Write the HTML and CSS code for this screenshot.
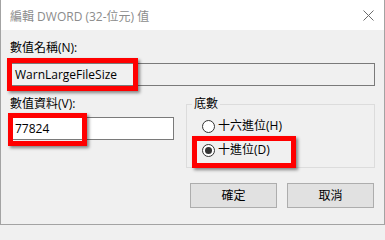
FILE: index.html
```html
<!DOCTYPE html>
<html>
<head>
<meta charset="utf-8">
<link rel="stylesheet" href="styles.css">
</head>
<body>
<div class="window">
  <div class="titlebar">
    <span class="title">編輯 DWORD (32-位元) 值</span>
    <svg class="close" width="11" height="11" viewBox="0 0 11 11"><path d="M0.5 0.5 L10.5 10.5 M10.5 0.5 L0.5 10.5" stroke="#6b6b6b" stroke-width="1" fill="none"/></svg>
  </div>
  <div class="content">
    <div class="label first">數值名稱(N):</div>
    <div class="textbox readonly">WarnLargeFileSize</div>
    <div class="lower">
      <div class="datacol">
        <div class="label">數值資料(V):</div>
        <div class="textbox data">77824</div>
      </div>
      <fieldset class="group">
        <legend>底數</legend>
        <div class="radio"><span class="dot"></span><span>十六進位(H)</span></div>
        <div class="radio"><span class="dot checked"></span><span>十進位(D)</span></div>
      </fieldset>
    </div>
    <div class="buttons">
      <div class="btn">確定</div>
      <div class="btn">取消</div>
    </div>
  </div>
  <div class="mark mark-name"></div>
  <div class="mark mark-data"></div>
  <div class="mark mark-radio"></div>
</div>
</body>
</html>
```
FILE: styles.css
```css
html, body {
  margin: 0;
  padding: 0;
  background: #f0f0f0;
}
body {
  font-family: "Open Sans", "Noto Sans CJK TC", sans-serif;
  font-size: 12px;
  line-height: 16px;
  color: #000;
}
.window {
  position: relative;
  width: 385px;
  height: 225px;
  box-sizing: border-box;
  border: 1px solid #a3a3a3;
  border-top: 0;
  background: #f0f0f0;
  display: flex;
  flex-direction: column;
}
.titlebar {
  height: 30px;
  background: #fff;
  display: flex;
  justify-content: space-between;
  align-items: flex-start;
  padding: 0 9px;
}
.title {
  margin-top: 9px;
  color: #8c8c8c;
}
.close {
  margin-top: 10px;
  margin-right: 1px;
}
.content {
  padding: 0 9px;
  display: flex;
  flex-direction: column;
}
.label.first {
  margin-top: 10px;
}
.textbox {
  box-sizing: border-box;
  height: 23px;
  border: 1px solid #7a7a7a;
  padding: 2px 4px;
  line-height: 17px;
}
.readonly {
  margin-top: 7px;
  background: #f0f0f0;
}
.lower {
  margin-top: 10px;
  display: grid;
  grid-template-columns: 164px 1fr;
  column-gap: 12px;
  align-items: start;
}
.data {
  margin-top: 5px;
  background: #fff;
}
.group {
  margin: 0;
  border: 1px solid #dcdcdc;
  padding: 2px 0 5px 15px;
  min-width: 0;
}
.group legend {
  padding: 0 2px;
  margin-left: -10px;
}
.radio {
  height: 24px;
  display: flex;
  align-items: center;
  gap: 3px;
}
.dot {
  box-sizing: border-box;
  width: 13px;
  height: 13px;
  border: 1px solid #333;
  border-radius: 50%;
  background: #fff;
  display: flex;
  align-items: center;
  justify-content: center;
}
.dot.checked::after {
  content: "";
  width: 7px;
  height: 7px;
  border-radius: 50%;
  background: #333;
}
.buttons {
  margin-top: 15px;
  display: flex;
  justify-content: flex-end;
  gap: 10px;
  padding-right: 1px;
}
.btn {
  box-sizing: border-box;
  width: 87px;
  height: 25px;
  background: #e1e1e1;
  border: 1px solid #adadad;
  display: flex;
  align-items: center;
  justify-content: center;
}
.mark {
  position: absolute;
  box-sizing: border-box;
  border: 5px solid #ff0000;
  box-shadow: 2px 2px 3px rgba(0, 0, 0, 0.45);
}
.mark-name {
  left: 6px;
  top: 58px;
  width: 131px;
  height: 33px;
}
.mark-data {
  left: 7px;
  top: 113px;
  width: 79px;
  height: 33px;
}
.mark-radio {
  left: 191px;
  top: 136px;
  width: 104px;
  height: 32px;
}
```
